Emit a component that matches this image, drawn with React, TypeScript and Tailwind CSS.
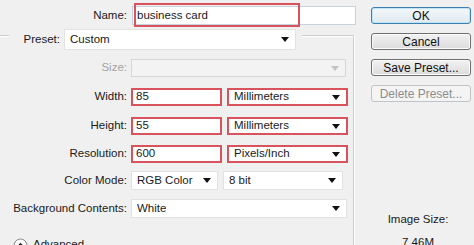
import React from "react";

const Arrow = ({ color = "#111" }: { color?: string }) => (
  <svg width="8" height="5" viewBox="0 0 8 5" className="shrink-0">
    <polygon points="0,0 8,0 4,5" fill={color} />
  </svg>
);

function Select({
  text,
  className,
  red,
  disabled,
}: {
  text?: string;
  className: string;
  red?: boolean;
  disabled?: boolean;
}) {
  return (
    <div
      className={
        "flex items-center justify-between pl-[5px] pr-[6px] " +
        (red
          ? "border-2 border-[#d9535c] bg-white "
          : disabled
          ? "border border-[#d6d6d6] bg-[#f3f3f3] "
          : "border border-[#e2e2e2] bg-white ") +
        className
      }
    >
      <span className="truncate">{text}</span>
      <Arrow color={disabled ? "#c4c4c4" : "#111"} />
    </div>
  );
}

function Btn({
  children,
  kind = "normal",
}: {
  children: React.ReactNode;
  kind?: "ok" | "normal" | "disabled";
}) {
  const cls =
    kind === "ok"
      ? "border-[#3c7fb1] bg-linear-to-b from-[#f3f8fb] to-[#dfe9ef] shadow-[inset_0_0_0_1px_#bfe3f7] text-[#111]"
      : kind === "disabled"
      ? "border-[#bfc3c6] bg-[#f4f4f4] text-[#8d8d8d]"
      : "border-[#707070] bg-linear-to-b from-[#f2f2f2] to-[#dcdcdc] shadow-[inset_0_0_0_1px_#fbfbfb] text-[#111]";
  return (
    <div
      className={
        "w-[100px] h-[17px] rounded-[3px] border flex items-center justify-center leading-none text-[12px] " +
        cls
      }
    >
      {children}
    </div>
  );
}

function Row({
  label,
  children,
  className = "",
  labelClass = "",
}: {
  label: string;
  children: React.ReactNode;
  className?: string;
  labelClass?: string;
}) {
  return (
    <div className={"flex items-center " + className}>
      <div className={"w-[127px] text-right whitespace-nowrap " + labelClass}>{label}</div>
      <div className="ml-[4px] flex items-stretch gap-[5px] h-full">{children}</div>
    </div>
  );
}

export default function App() {
  return (
    <div
      className="w-[474px] h-[245px] overflow-hidden bg-[#f0f0f0] flex text-[11.5px] text-[#1a1a1a]"
      style={{ fontFamily: '"Liberation Sans", Arial, sans-serif' }}
    >
      {/* left */}
      <div className="w-[358px] shrink-0 flex flex-col">
        {/* Name */}
        <div className="flex items-center mt-[6px] h-[19px]">
          <div className="w-[127px] text-right">Name:</div>
          <div className="relative ml-[5px] w-[224px] h-[19px] bg-white border border-[#c5d3df] flex items-center pl-[4px]">
            <span>business card</span>
            <div className="absolute left-[1px] top-[-4px] w-[166px] h-[24px] border-2 border-[#d9535c]" />
          </div>
        </div>

        {/* Group box */}
        <div className="mt-[10px] w-[354px] border-r border-[#cdcdcd] shadow-[1px_0_0_#ffffff] flex flex-col">
          {/* Preset legend row */}
          <div className="flex items-start -mt-[6px]">
            <div className="w-[9px] mt-[6px] h-0 border-t border-b border-t-[#cdcdcd] border-b-white" />
            <div className="w-[55px] pr-[4px] text-right leading-[21px]">Preset:</div>
            <Select text="Custom" className="w-[232px] h-[21px]" />
            <div className="flex-1 ml-[6px] mt-[6px] h-0 border-t border-b border-t-[#cdcdcd] border-b-white" />
          </div>

          <Row label="Size:" className="mt-[9px] h-[18px]" labelClass="text-[#a3a3a3]">
            <Select className="w-[215px]" disabled />
          </Row>

          <Row label="Width:" className="mt-[11px] h-[18px]">
            <div className="w-[91px] border-2 border-[#d9535c] bg-white flex items-center pl-[3px]">85</div>
            <Select text="Millimeters" className="w-[121px]" red />
          </Row>

          <Row label="Height:" className="mt-[11px] h-[18px]">
            <div className="w-[91px] border-2 border-[#d9535c] bg-white flex items-center pl-[3px]">55</div>
            <Select text="Millimeters" className="w-[121px]" red />
          </Row>

          <Row label="Resolution:" className="mt-[10px] h-[18px]">
            <div className="w-[91px] border-2 border-[#d9535c] bg-white flex items-center pl-[3px]">600</div>
            <Select text="Pixels/Inch" className="w-[121px]" red />
          </Row>

          <Row label="Color Mode:" className="mt-[8px] h-[19px]">
            <Select text="RGB Color" className="w-[87px]" />
            <Select text="8 bit" className="w-[120px]" />
          </Row>

          <Row label="Background Contents:" className="mt-[9px] h-[19px]">
            <Select text="White" className="w-[216px]" />
          </Row>

          <div className="flex items-center mt-[19px] pl-[13px] h-[16px]">
            <svg width="15" height="15" viewBox="0 0 15 15" className="shrink-0">
              <circle cx="7.5" cy="7.5" r="6.5" fill="#fafafa" stroke="#8a8a8a" strokeWidth="1" />
              <polyline points="4.5,9 7.5,6 10.5,9" fill="none" stroke="#222" strokeWidth="1.6" />
            </svg>
            <span className="ml-[5px]">Advanced</span>
          </div>
          <div className="h-[20px]" />
        </div>
      </div>

      {/* right */}
      <div className="flex-1 flex flex-col pl-[13px]">
        <div className="mt-[7px] flex flex-col gap-[9px]">
          <Btn kind="ok">OK</Btn>
          <Btn>Cancel</Btn>
          <Btn>Save Preset...</Btn>
          <Btn kind="disabled">Delete Preset...</Btn>
        </div>
        <div className="mt-[110px] w-[100px] text-center leading-[14px] -ml-[3px]">Image Size:</div>
        <div className="mt-[9px] w-[100px] text-center leading-[14px] -ml-[3px]">7.46M</div>
      </div>
    </div>
  );
}
